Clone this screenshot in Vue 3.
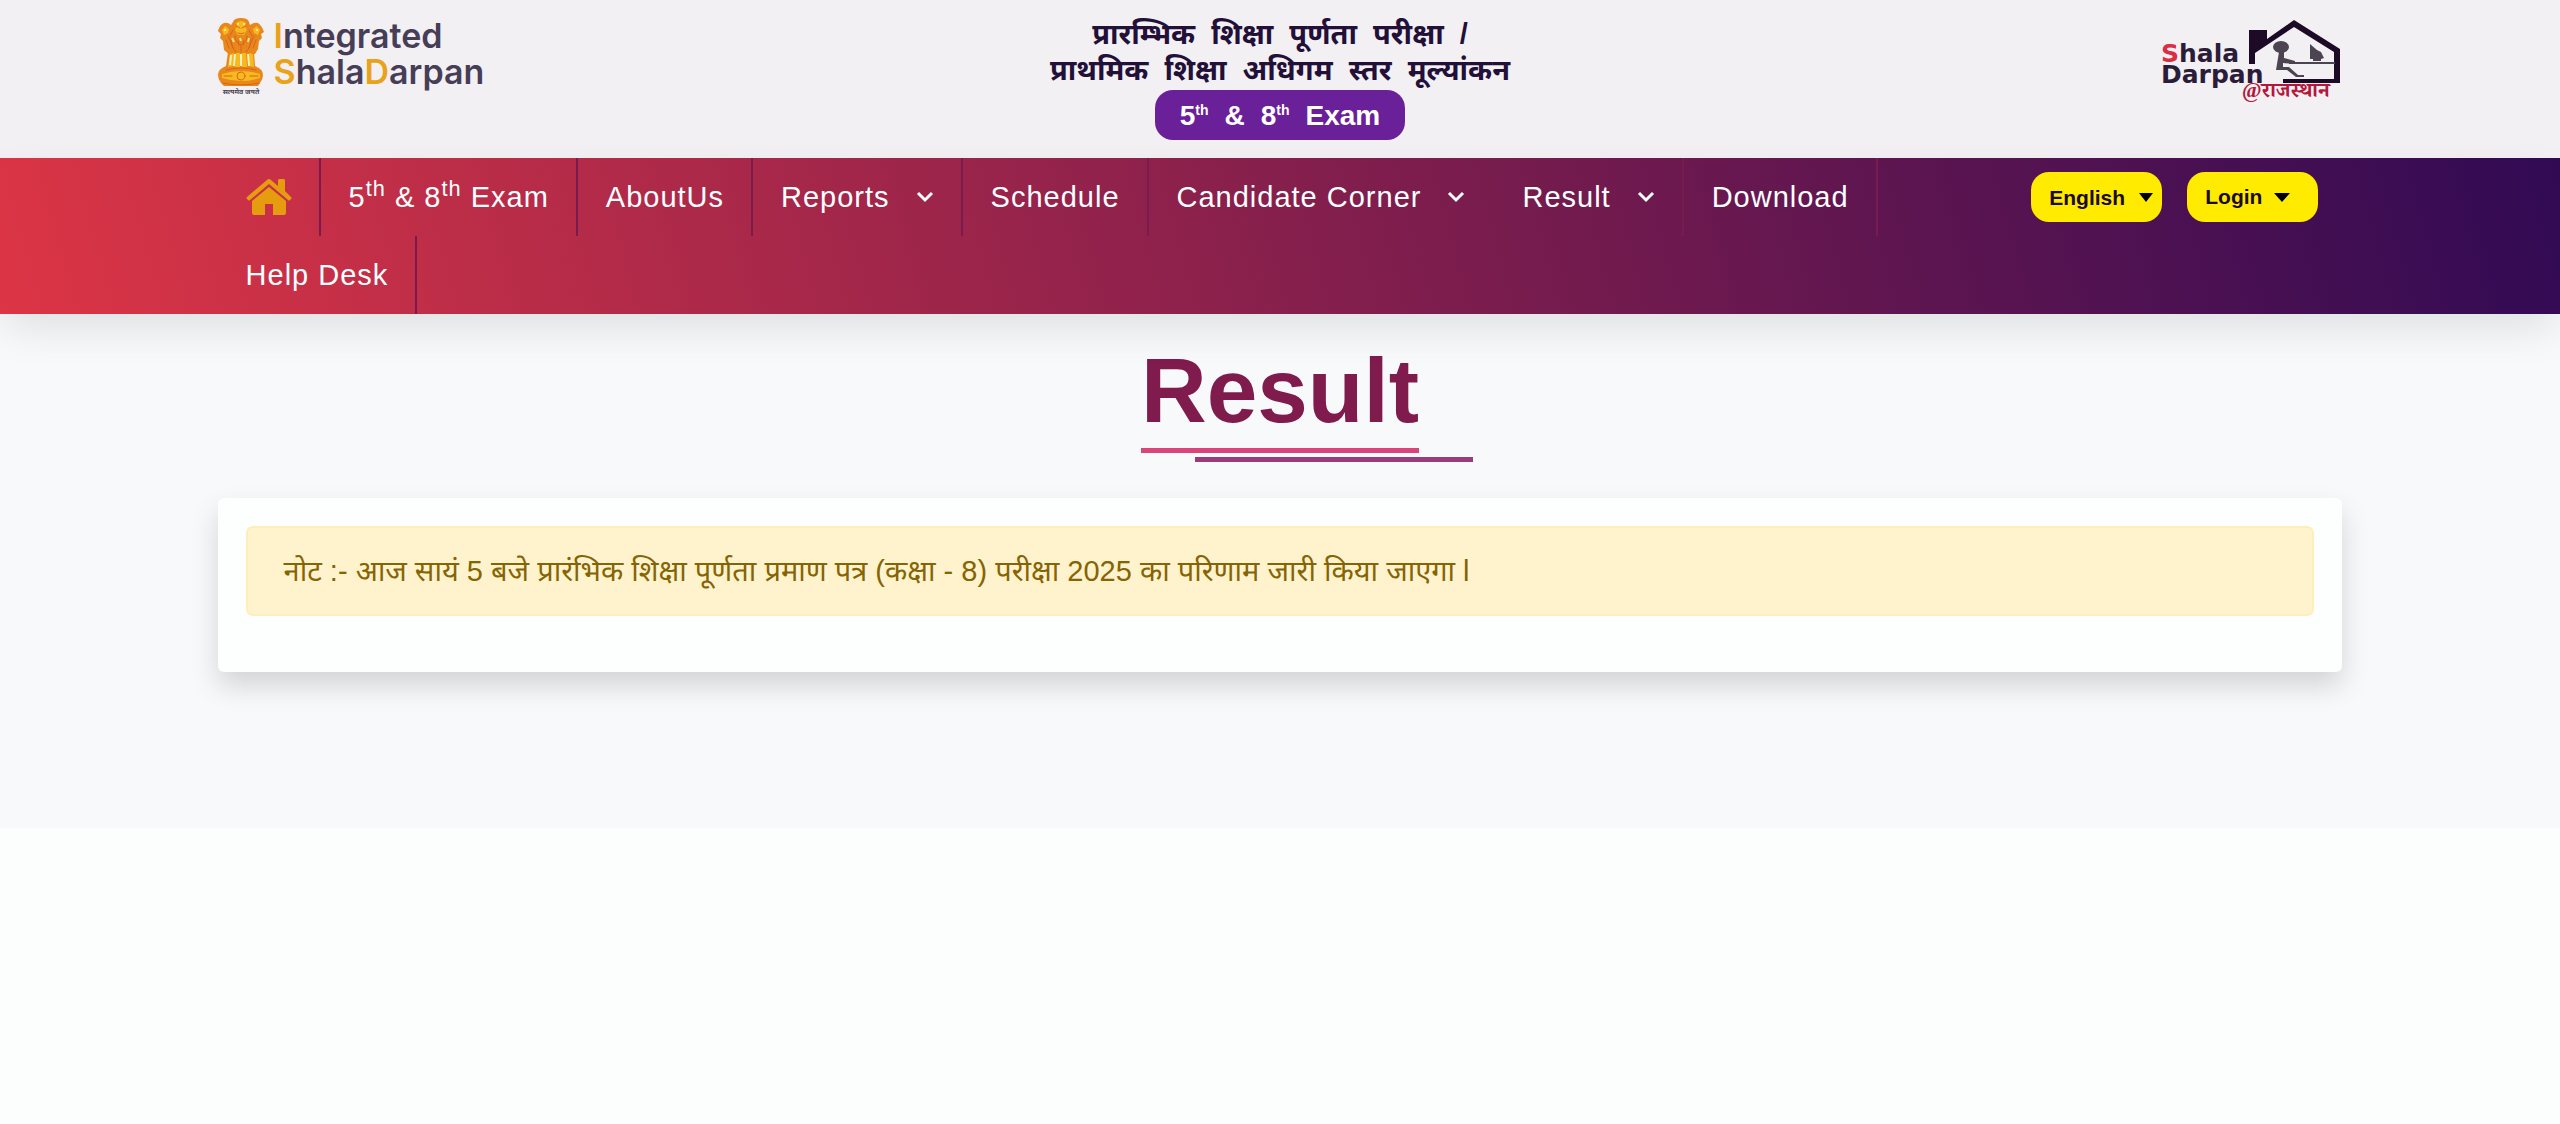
<script setup>
import { ref } from 'vue'

const language = ref('English')
const menu = [
  { label: 'AboutUs' },
  { label: 'Reports', drop: true },
  { label: 'Schedule' },
  { label: 'Candidate Corner', drop: true, plain: true },
  { label: 'Result', drop: true },
  { label: 'Download' },
  { label: 'Help Desk' },
]
const titleLines = [
  ['प्रारम्भिक', 'शिक्षा', 'पूर्णता', 'परीक्षा', '/'],
  ['प्राथमिक', 'शिक्षा', 'अधिगम', 'स्तर', 'मूल्यांकन'],
]
</script>

<template>
  <div class="page">
    <header class="top">
      <div class="container top-row">
        <a href="#" class="brand" aria-label="Integrated ShalaDarpan">
          <svg class="emblem" viewBox="0 0 46 78" width="46" height="78" aria-hidden="true">
            <g fill="#e8871c">
              <path d="M15 4Q16 0 23 0t8 4l1 3q4-3 8-2 4 3 6 9l-3 2 1 4-3 3-1 8-3 5-25 1-6-5-1-9-3-3 1-4-3-3q2-7 6-8 4-1 7 2z" />
              <path d="M10 34h26l1 14q8 3 8 9 0 4-3 8l-2 3H6l-3-3q-3-4-3-8 0-6 8-9z" />
            </g>
            <g fill="#f6b91f">
              <path d="M18 5q5-4 10 0l-1 3 2 4-3 5h-6l-3-5 2-4zM4 12l3-4 4 3-1 4-4 2zM42 12l-3-4-4 3 1 4 4 2z" />
              <path d="M12 36l4-1-1 13-5 1zM18 35h4v14h-5zM24 35h4l1 14h-5zM31 35l4 1 1 13-5-1z" />
              <path d="M4 56q19-6 38 0v4q-19 6-38 0z" />
            </g>
            <g fill="none" stroke="#d9641c" stroke-width="1" stroke-linecap="round">
              <path d="M18 8l4 2M28 8l-4 2M20 15q3 2 6 0M17 18q0 7 6 9 6-2 6-9M13 20q0 9 5 14M33 20q0 9-5 14M8 22l3 8M38 22l-3 8M23 28v6M20 22l1 5M26 22l-1 5M10 18l5 12M36 18l-5 12M15 12l-3 6M31 12l3 6" />
              <path d="M5 65q18 4 36 0M8 52q15-4 30 0M6 58h8M32 58h8" />
              <circle cx="23" cy="58" r="4" />
            </g>
            <path d="M17 36l-1 12M23 36v12M30 36l1 12M13 37l-1 10" stroke="#fff3b8" stroke-width="2" />
            <path d="M19 6h2M25 6h2M6 12h2M38 12h2M14 20l2 4M31 20l-1 4M22 20l1 3" stroke="#ffe27a" stroke-width="2" />
            <text x="23" y="76" text-anchor="middle" class="motto">सत्यमेव जयते</text>
          </svg>
          <span class="brand-text">
            <span><b>I</b>ntegrated</span>
            <span><b>S</b>hala<b>D</b>arpan</span>
          </span>
        </a>

        <div class="heading">
          <p v-for="(line, i) in titleLines" :key="i" class="heading-line">
            <span v-for="word in line" :key="word">{{ word }}</span>
          </p>
          <p class="pill">
            <span>5<sup>th</sup></span><span>&amp;</span><span>8<sup>th</sup></span><span>Exam</span>
          </p>
        </div>

        <a href="#" class="shala" aria-label="Shala Darpan Rajasthan">
          <svg viewBox="0 0 180 80" width="180" height="80" aria-hidden="true">
            <path d="M87 44V10h18v9L132 0l46 29v34h-57v-4h51V32L132 7 93 33v11z" fill="#1c0a26" />
            <g fill="#4c4450">
              <ellipse cx="119" cy="27" rx="8" ry="6" />
              <path d="M117 32h5v6l11 3v3l-12-1v4h6l9 8h6v2h-8l-9-7h-11z" />
              <path d="M148 24l7 6 4 2 3 6-3 1v2h-8v-2h-3z" />
              <path d="M127 42h46v2h-46z" />
            </g>
            <text x="-1" y="42" class="word"><tspan fill="#d92e44">S</tspan>hala</text>
            <text x="-1" y="63" class="word">Darpan</text>
            <text x="80" y="77" class="state">@राजस्थान</text>
          </svg>
        </a>
      </div>
    </header>

    <nav class="bar" aria-label="Main">
      <div class="container bar-row">
        <ul class="menu">
          <li>
            <a href="#" class="item" aria-label="Home">
              <svg viewBox="0 0 46 40" width="46" height="40" fill="#e69c0f" aria-hidden="true">
                <path d="M23 2q1 0 2 1l7 6V4q0-2 1-2h5q1 0 1 2v10l6 6q1 1 0 2l-1 1q-1 1-2 0L23 7 4 23q-1 1-2 0l-1-1q-1-1 0-2L21 3q1-1 2-1z" />
                <path d="M23 10l17 14v12q0 2-2 2H27V27h-8v11H8q-2 0-2-2V24z" />
              </svg>
            </a>
          </li>
          <li><a href="#" class="item">5<sup>th</sup>&nbsp;&amp; 8<sup>th</sup>&nbsp;Exam</a></li>
          <li v-for="m in menu" :key="m.label" :class="{ plain: m.plain }">
            <button v-if="m.drop" type="button" class="item">
              {{ m.label }}
              <svg class="chev" viewBox="0 0 18 12" width="18" height="12" aria-hidden="true">
                <path d="M2 2l7 7 7-7" fill="none" stroke="#fff" stroke-width="3" />
              </svg>
            </button>
            <a v-else href="#" class="item">{{ m.label }}</a>
          </li>
        </ul>
        <div class="actions">
          <label class="lang">
            <select v-model="language" class="btn" aria-label="Language">
              <option>English</option>
              <option>हिन्दी</option>
            </select>
            <svg class="caret" viewBox="0 0 14 9" width="14" height="9" aria-hidden="true"><path d="M0 0h14L7 9z" /></svg>
          </label>
          <button type="button" class="btn login">
            Login
            <svg viewBox="0 0 16 9" width="16" height="9" aria-hidden="true"><path d="M0 0h16L8 9z" /></svg>
          </button>
        </div>
      </div>
    </nav>

    <main class="content">
      <div class="container">
        <div class="title">
          <h1>Result</h1>
          <span class="line pink"></span>
          <span class="line purple"></span>
        </div>
        <section class="card">
          <p class="alert" role="alert">
            नोट :- आज सायं 5 बजे प्रारंभिक शिक्षा पूर्णता प्रमाण पत्र (कक्षा - 8) परीक्षा 2025 का परिणाम जारी किया जाएगा l
          </p>
        </section>
      </div>
    </main>
  </div>
</template>

<style>
body {
  margin: 0;
  background: #fcfefd;
}
</style>

<style scoped>
.page {
  font-family: "Liberation Sans", "Noto Sans", "Noto Sans Devanagari", sans-serif;
  font-size: 29px;
}
.page * {
  box-sizing: border-box;
}
p, h1, ul {
  margin: 0;
  padding: 0;
}
a {
  text-decoration: none;
}
svg {
  display: block;
  overflow: visible;
}
sup {
  font-size: 75%;
  line-height: 0;
}
.container {
  width: 83%;
  margin: 0 auto;
}
.top {
  background: #f3f0f4;
}
.top-row {
  display: grid;
  grid-template-columns: 1fr auto 1fr;
  align-items: start;
  padding: 16px 0 18px;
}
.brand {
  display: flex;
  gap: 10px;
  justify-self: start;
  padding-top: 2px;
}
.motto {
  font: 700 7px "Noto Sans Devanagari", sans-serif;
  fill: #4c4450;
}
.brand-text {
  display: flex;
  flex-direction: column;
  font: 600 34px/36px Inter, sans-serif;
  color: #463d57;
}
.brand-text b {
  color: #e9a31b;
  font-weight: 600;
}
.heading {
  display: flex;
  flex-direction: column;
  align-items: center;
  font-weight: 700;
}
.heading-line {
  display: flex;
  gap: 16px;
  color: #221038;
  line-height: 36px;
}
.pill {
  display: flex;
  gap: 16px;
  margin-top: 2px;
  padding: 0 25px;
  border-radius: 18px;
  background: #6a2099;
  color: #fff;
  font-size: 28px;
  line-height: 52px;
  height: 50px;
}
.pill sup {
  font-size: 50%;
}
.shala {
  justify-self: end;
  padding-top: 4px;
}
.word {
  font: 700 25px "DejaVu Sans", sans-serif;
  fill: #2b1d3a;
}
.state {
  font: 700 21px "Liberation Serif", "Noto Serif Devanagari", serif;
  fill: #b5173c;
}
.bar {
  position: relative;
  background: linear-gradient(75deg, #dc3545, #310a54);
  box-shadow: 0 18px 40px -4px rgba(0, 0, 0, 0.1);
}
.bar-row {
  display: grid;
  grid-template-columns: 5fr 1fr;
}
.menu {
  display: flex;
  flex-wrap: wrap;
  list-style: none;
}
.menu li {
  border-right: 2px solid #7a1b50;
}
.menu .plain {
  border-color: transparent;
}
.item {
  display: flex;
  align-items: center;
  height: 78px;
  padding: 0 27px 0 28px;
  border: 0;
  background: none;
  color: #fff;
  font-family: inherit;
  font-size: 29px;
  letter-spacing: 1px;
  white-space: nowrap;
}
.item sup {
  align-self: center;
  margin-bottom: 16px;
}
.chev {
  margin-left: 26px;
}
.actions {
  display: flex;
  align-items: flex-start;
  justify-content: flex-end;
  gap: 25px;
  padding: 14px 24px 0 0;
}
.lang {
  position: relative;
}
.btn {
  display: flex;
  align-items: center;
  height: 50px;
  padding: 0 18px;
  border: 0;
  border-radius: 18px;
  background: #ffeb00;
  color: #1a0a1a;
  font: 700 21px "Liberation Sans", sans-serif;
}
.lang .btn {
  appearance: none;
  width: 131px;
}
.caret {
  position: absolute;
  right: 9px;
  top: 21px;
  pointer-events: none;
}
.login {
  gap: 12px;
  padding-right: 28px;
}
.content {
  padding: 25px 0 156px;
  background: #f8f9fa;
}
.title {
  width: max-content;
  margin: 0 auto 36px;
}
h1 {
  margin-bottom: 6px;
  color: #801b4d;
  font-size: 91px;
  line-height: 103px;
}
.line {
  display: block;
  height: 5px;
}
.pink {
  background: #db437b;
}
.purple {
  margin: 4px -54px 0 54px;
  background: #983d7a;
}
.card {
  padding: 28px 28px 56px;
  border-radius: 6px;
  background: #fdfefe;
  box-shadow: 0 14px 28px rgba(0, 0, 0, 0.15);
}
.alert {
  padding: 22px 36px;
  border: 2px solid #ffeeba;
  border-radius: 7px;
  background: #fff3cd;
  color: #856404;
  line-height: 42px;
}
</style>
